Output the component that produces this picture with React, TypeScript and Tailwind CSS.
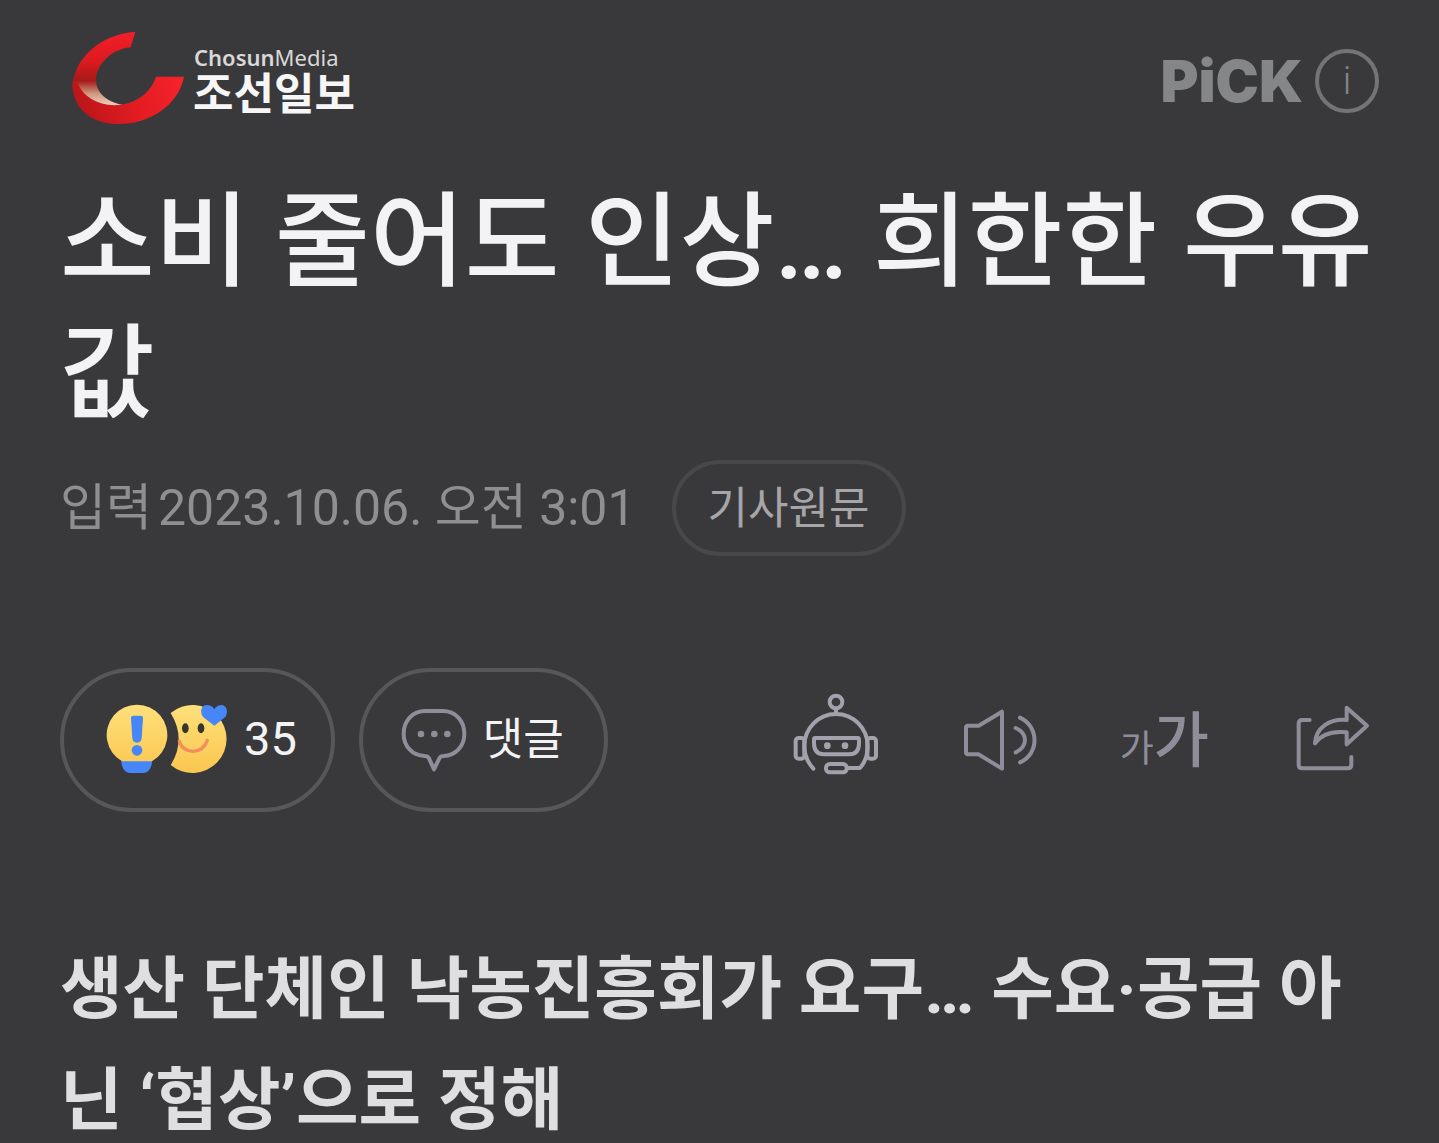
import React from 'react';

const ChosunMark: React.FC = () => (
  <svg className="w-[113px] h-[94px] shrink-0" viewBox="66 48 339 282" fill="none" aria-hidden="true">
    <defs>
      <linearGradient id="arm" x1="0" y1="52" x2="0" y2="272" gradientUnits="userSpaceOnUse">
        <stop offset="0" stopColor="#f21f27" />
        <stop offset="0.4" stopColor="#dc1a20" />
        <stop offset="0.66" stopColor="#a51a18" />
        <stop offset="0.84" stopColor="#cf9a80" />
        <stop offset="1" stopColor="#ecd2bd" />
      </linearGradient>
      <linearGradient id="swoosh" x1="80" y1="300" x2="380" y2="190" gradientUnits="userSpaceOnUse">
        <stop offset="0" stopColor="#b81518" />
        <stop offset="0.55" stopColor="#e31c22" />
        <stop offset="1" stopColor="#f4222a" />
      </linearGradient>
    </defs>
    <path d="M256 50C150 58 70 132 68 215C90 262 150 284 222 270C170 262 138 232 138 194C140 148 182 103 242 97Z" fill="url(#arm)" />
    <path d="M68 200C64 278 122 327 205 327C300 327 386 270 402 185H318C302 232 262 264 205 270C150 274 96 248 80 196Z" fill="url(#swoosh)" />
  </svg>
);

const ReactionIcons: React.FC = () => (
  <svg className="w-[122px] h-[70px]" viewBox="171 144 366 210" fill="none" aria-hidden="true">
    <defs>
      <linearGradient id="face" x1="0" y1="147" x2="0" y2="351" gradientUnits="userSpaceOnUse">
        <stop offset="0" stopColor="#fee07a" />
        <stop offset="1" stopColor="#fbc650" />
      </linearGradient>
    </defs>
    <path d="M217 314H309C309 337 297 351 283 351H243C229 351 217 337 217 314Z" fill="#4686f7" />
    <path d="M219 316A91 91 0 1 1 309 316Z" fill="url(#face)" />
    <path d="M246 186Q246 179 254 179H274Q282 179 282 186L278 246Q277 260 264 260T250 246Z" fill="#4686f7" />
    <circle cx="264" cy="283" r="16" fill="#4686f7" />
    <path d="M365 171A102 102 0 1 1 365 327Q413 250 365 171Z" fill="url(#face)" />
    <ellipse cx="409" cy="217" rx="10" ry="15" fill="#37342b" />
    <ellipse cx="456" cy="217" rx="10" ry="15" fill="#37342b" />
    <path d="M391 256Q400 286 433 286Q464 284 475 253" stroke="#f28e5c" strokeWidth="10" strokeLinecap="round" />
    <path d="M496 209L463 184C452 172 455 147 473 147C485 147 492 152 496 160C500 152 508 147 518 147C536 149 538 172 528 184Z" fill="#4686f7" />
  </svg>
);

const CommentIcon: React.FC = () => (
  <svg className="w-[66px] h-[66px]" viewBox="156 156 198 198" fill="none" stroke="#8f8d99" strokeWidth="12" strokeLinejoin="round" aria-hidden="true">
    <path d="M229 168H281C320 168 346 198 346 236S320 302 284 303Q275 303 271 310L255 343L240 310Q236 303 227 303C190 302 164 274 164 236S190 168 229 168Z" />
    <g fill="#8f8d99" stroke="none">
      <circle cx="216" cy="237" r="10" />
      <circle cx="256" cy="237" r="10" />
      <circle cx="295" cy="237" r="10" />
    </g>
  </svg>
);

const RobotIcon: React.FC = () => (
  <svg className="w-[88px] h-[84px]" viewBox="66 36 264 252" fill="none" stroke="#a3a1ab" strokeWidth="12" strokeLinecap="round" strokeLinejoin="round" aria-hidden="true">
    <circle cx="198" cy="66" r="19" />
    <path d="M198 86V100" />
    <path d="M130 266C112 246 103 222 103 198A95 96 0 0 1 293 198C293 224 286 246 270 264H232" />
    <rect x="77" y="174" width="26" height="62" rx="9" />
    <rect x="292" y="174" width="26" height="62" rx="9" />
    <path d="M136 174H263Q267 174 267 180V190C267 212 258 223 238 223H162C142 223 132 212 132 190V178Q132 174 136 174Z" />
    <rect x="168" y="252" width="62" height="25" rx="11" />
    <g fill="#a3a1ab" stroke="none">
      <circle cx="172" cy="197" r="10" />
      <circle cx="225" cy="197" r="10" />
    </g>
  </svg>
);

const SpeakerIcon: React.FC = () => (
  <svg className="w-[76px] h-[64px]" viewBox="576 84 228 192" fill="none" stroke="#8f8d99" strokeWidth="12" strokeLinecap="round" strokeLinejoin="round" aria-hidden="true">
    <path d="M594 137H626L696 95V266L626 223H594Q588 223 588 217V143Q588 137 594 137Z" />
    <path d="M737 144C774 160 774 200 737 217" />
    <path d="M750 113C808 140 808 222 750 247" />
  </svg>
);

const ShareIcon: React.FC = () => (
  <svg className="w-[76px] h-[68px]" viewBox="588 72 228 204" fill="none" stroke="#8f8d99" strokeWidth="12" strokeLinecap="round" strokeLinejoin="round" aria-hidden="true">
    <path d="M632 120H610Q599 120 599 131V254Q599 265 610 265H746Q757 265 757 254V231" />
    <path d="M743 83L804 137L743 193V157C700 152 668 162 648 190C650 144 690 116 743 120Z" />
  </svg>
);

const App: React.FC = () => {
  return (
    <main lang="ko" className="min-h-screen bg-[#39393b] px-[60px] pt-7 font-['Roboto','Noto_Sans_CJK_KR',sans-serif]">
      <header className="flex items-start justify-between">
        <a href="#chosun" className="flex items-start pl-3 pt-[3px]">
          <ChosunMark />
          <span className="flex flex-col gap-2 pl-2 pt-[14px] text-[#f6f6f6]">
            <span className="pl-px font-['Noto_Sans',sans-serif] text-[22px] leading-6 text-[#d8d8d8]">
              <b className="font-semibold">Chosun</b>Media
            </span>
            <span className="text-[44px] leading-9 font-bold">조선일보</span>
          </span>
        </a>
        <div className="flex items-center gap-3 pt-[21px]">
          <span className="font-['Inter',sans-serif] text-[58px] leading-[64px] font-black text-[#858688]">PiCK</span>
          <button aria-label="PiCK 안내" className="flex h-16 w-16 items-center justify-center rounded-full border-4 border-[#747476] text-[38px] leading-none font-light text-[#858688]">
            i
          </button>
        </div>
      </header>

      <h1 className="mt-[52px] text-[103px] leading-[132px] font-medium text-[#f3f3f5]">
        소비 줄어도 인상… 희한한 우유값
      </h1>

      <div className="mt-[19px] flex items-center gap-9">
        <p className="flex gap-[6px] text-[50px] leading-[60px] text-[#8f8f91]">
          <span>입력</span>
          <time dateTime="2023-10-06T03:01">2023.10.06. 오전 3:01</time>
        </p>
        <a href="#original" className="flex h-24 items-center rounded-full border-4 border-[#48484a] px-8 pt-[2px] text-[44px] leading-none text-[#a6a6a8]">
          기사원문
        </a>
      </div>

      {/* 반응, 댓글, 도구 */}
      <div className="mt-28 flex items-center justify-between">
        <div className="flex gap-6">
          <button className="flex h-36 items-center gap-4 rounded-full border-4 border-[#575759] pb-[3px] pl-[42px] pr-[34px] text-[47px] leading-none text-[#f3f3f5]">
            <ReactionIcons />
            35
          </button>
          <button className="flex h-36 items-center gap-4 rounded-full border-4 border-[#575759] pl-[38px] pr-10 text-[44px] leading-none text-[#f3f3f5]">
            <CommentIcon />
            댓글
          </button>
        </div>
        <div className="flex items-center gap-[82px] pr-2">
          <button aria-label="요약봇" className="pb-3"><RobotIcon /></button>
          <button aria-label="본문 듣기"><SpeakerIcon /></button>
          <button aria-label="글자 크기 변경" className="mr-1 flex items-baseline pt-1 leading-none text-[#8f8d99]">
            <span className="text-[37px]">가</span>
            <span className="text-[60px] font-medium">가</span>
          </button>
          <button aria-label="공유" className="pb-1"><ShareIcon /></button>
        </div>
      </div>

      <h2 className="mt-[123px] text-[68px] leading-[111px] font-bold text-[#dfdfe1]">
        생산 단체인 낙농진흥회가 요구… 수요·공급 아닌 ‘협상’으로 정해
      </h2>
    </main>
  );
};

export default App;
